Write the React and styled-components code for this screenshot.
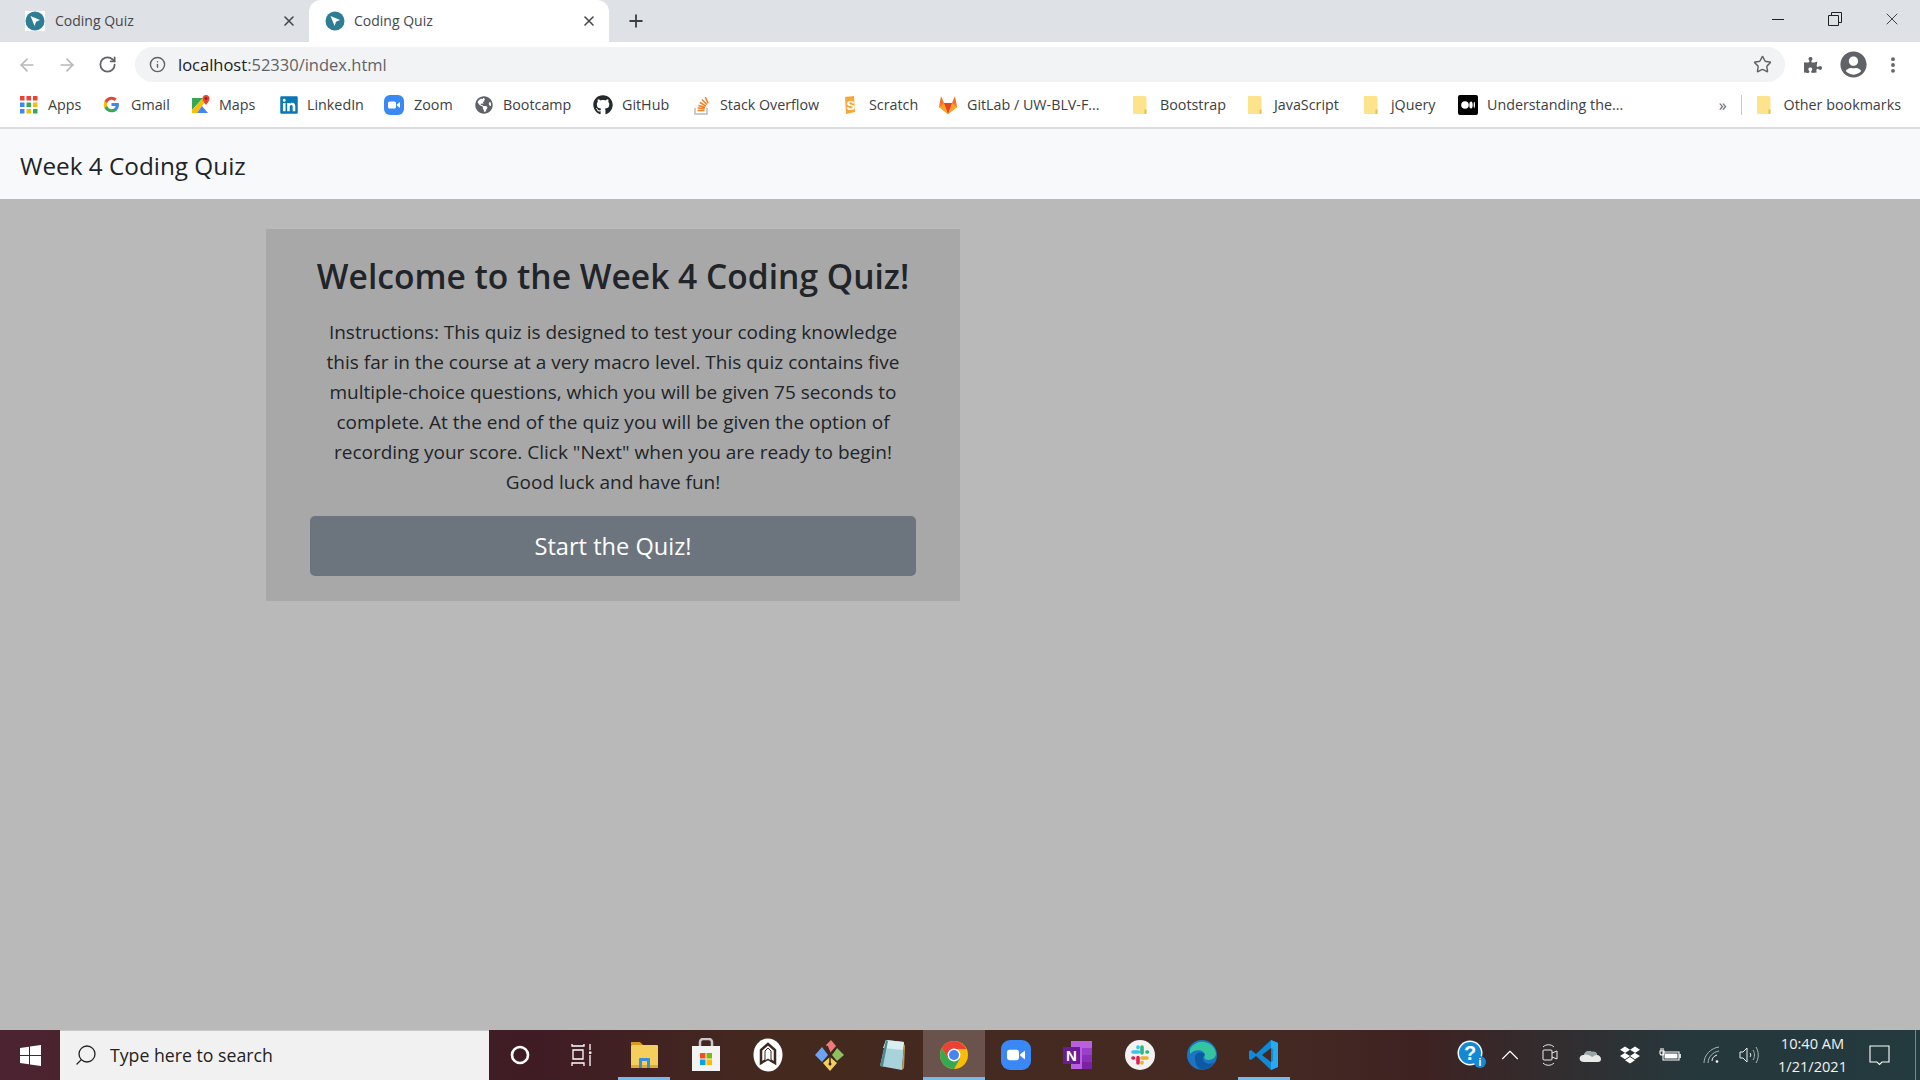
import React from 'react'
import styled, { createGlobalStyle } from 'styled-components'
import { ArrowLeft, ArrowRight, RotateCw, Info, Star, EllipsisVertical, Plus, X, ChevronUp, Search } from 'lucide-react'
import { FaGithub, FaLinkedin, FaDropbox, FaPuzzlePiece, FaUserCircle, FaGlobeAmericas } from 'react-icons/fa'

const GlobalStyle = createGlobalStyle`
  html, body { margin: 0; padding: 0; height: 100%; overflow: hidden; }
  body { font-family: "Open Sans", "Noto Sans", sans-serif; color: #212529; }
  * { box-sizing: border-box; }
`

const Screen = styled.div`
  display: flex;
  flex-direction: column;
  width: 1920px;
  height: 1080px;
  overflow: hidden;
  background: #b9b9b9;
`

const TabStrip = styled.div`
  display: flex;
  align-items: stretch;
  height: 42px;
  background: #dee1e6;
  padding-left: 9px;
`

const Tab = styled.div`
  display: flex;
  align-items: center;
  width: 300px;
  height: 42px;
  padding: 0 12px 1px 16px;
  background: ${p => (p.$active ? '#fff' : 'transparent')};
  border-radius: 12px 12px 0 0;
  font-size: 14px;
  color: #45484c;
`

const FaviconBox = styled.span`
  display: flex;
  background: ${p => (p.$boxed ? '#fff' : 'transparent')};
`

const TabTitle = styled.span`
  flex: 1;
  margin-left: ${p => (p.$active ? '9px' : '10px')};
`

const NewTab = styled.div`
  display: flex;
  align-items: center;
  margin-left: 17px;
  color: #3c4043;
`

const WindowButtons = styled.div`
  display: flex;
  margin-left: auto;
  color: #222;
`

const WindowButton = styled.div`
  display: flex;
  align-items: center;
  justify-content: center;
  width: 57px;
  height: 38px;
`

const Toolbar = styled.div`
  display: flex;
  align-items: center;
  height: 40px;
  padding: 5px 0 0 7px;
  background: #fff;
  color: #5f6368;
`

const NavButton = styled.div`
  display: flex;
  align-items: center;
  justify-content: center;
  width: 40px;
  color: ${p => (p.$disabled ? '#b6b8ba' : '#5f6368')};
`

const AddressBar = styled.div`
  display: flex;
  align-items: center;
  width: 1650px;
  height: 35px;
  margin-left: 8px;
  padding: 0 13px 0 14px;
  background: #f1f3f4;
  border-radius: 18px;
  font-size: 16.5px;
`

const UrlHost = styled.span`
  margin-left: 12px;
  color: #202124;
`

const UrlPath = styled.span`
  color: #5f6368;
`

const StarSlot = styled.span`
  display: flex;
  margin-left: auto;
`

const ToolIcons = styled.div`
  display: flex;
  align-items: center;
  margin-left: 15px;
`

const ToolIcon = styled.div`
  display: flex;
  justify-content: center;
  width: ${p => p.$w}px;
`

const BookmarkBar = styled.div`
  display: flex;
  align-items: center;
  height: 47px;
  padding-left: 20px;
  background: #fff;
  border-bottom: 2px solid #dadce0;
  font-size: 14.3px;
  color: #3c4043;
`

const Bookmark = styled.div`
  display: flex;
  align-items: center;
  flex: none;
  width: ${p => p.$w}px;
  white-space: nowrap;
`

const BookmarkIcon = styled.span`
  display: flex;
  align-items: center;
  flex: none;
  width: ${p => p.$slot || 28}px;
`

const Overflow = styled.div`
  margin-left: auto;
  font-size: 16px;
  color: #5f6368;
`

const Divider = styled.div`
  width: 1px;
  height: 20px;
  margin: 0 14px 0 14px;
  background: #c6c8ca;
`

const OtherBookmarks = styled(Bookmark)`
  margin-right: 19px;
  width: auto;
`

const NavBar = styled.nav`
  display: flex;
  align-items: center;
  height: 70px;
  padding: 2px 0 0 20px;
  background: #f8f9fa;
  font-size: 24.3px;
  color: #212529;
`

const Main = styled.main`
  flex: 1;
  padding: 30px 0 0 266px;
  background: #b9b9b9;
`

const Card = styled.section`
  display: flex;
  flex-direction: column;
  align-items: center;
  width: 694px;
  height: 372px;
  padding: 22px 44px 0;
  background: #a8a8a8;
`

const Title = styled.h1`
  margin: 0 0 16px;
  font-size: 33.6px;
  line-height: 50px;
  font-weight: 600;
  color: #212529;
  white-space: nowrap;
`

const Instructions = styled.p`
  margin: 0 0 19px;
  font-size: 19px;
  line-height: 30px;
  text-align: center;
  color: #212529;
  white-space: nowrap;
`

const StartButton = styled.button`
  width: 606px;
  height: 60px;
  border: 0;
  border-radius: 5px;
  background: #6c757d;
  color: #fff;
  font-family: inherit;
  font-size: 23.6px;
`

const Taskbar = styled.footer`
  display: flex;
  align-items: stretch;
  height: 50px;
  background: linear-gradient(90deg, #4c2431 0%, #3f1c24 28%, #44291f 40%, #452a23 66%, #3e2222 74%, #26383c 88%, #233a3e 100%);
  color: #fff;
`

const StartSlot = styled.div`
  display: flex;
  align-items: center;
  justify-content: center;
  width: 60px;
`

const SearchBox = styled.div`
  display: flex;
  align-items: center;
  width: 429px;
  padding: 0 0 2px 14px;
  background: #f1f1f1;
  border-top: 1px solid #c9c9c9;
  color: #222;
  font-size: 17.7px;
`

const SearchGlass = styled(Search)`
  transform: scaleX(-1);
`

const SearchText = styled.span`
  margin-left: 12px;
`

const TaskSlot = styled.div`
  display: flex;
  align-items: center;
  justify-content: center;
  position: relative;
  width: 62px;
  background: ${p => (p.$active ? 'rgba(255,255,255,.2)' : 'transparent')};
  ${p => p.$open && `
    &::after {
      content: "";
      position: absolute;
      bottom: 0;
      left: ${p.$active ? 0 : 5}px;
      right: ${p.$active ? 0 : 5}px;
      height: 3px;
      background: #76b9ed;
    }
  `}
`

const Tray = styled.div`
  display: flex;
  align-items: center;
  margin-left: auto;
`

const TraySlot = styled.div`
  display: flex;
  align-items: center;
  justify-content: center;
  width: 40px;
`

const Clock = styled.div`
  width: 85px;
  text-align: center;
  font-size: 14.6px;
  line-height: 23px;
  color: #f2f2f2;
`

const NotifySlot = styled.div`
  display: flex;
  justify-content: center;
  width: 48px;
`

const ShowDesktop = styled.div`
  width: 5px;
  height: 100%;
  margin-left: 12px;
  border-left: 1px solid #76868a;
`

const Favicon = () => (
  <svg width="20" height="20" viewBox="0 0 20 20">
    <circle cx="10" cy="10" r="9.5" fill="#2c7d95" />
    <path d="M5.5 5 L15 9 L11 10.8 L9.6 15 Z" fill="#fff" />
  </svg>
)

const AppsIcon = () => (
  <svg width="18" height="18" viewBox="0 0 18 18">
    {[0, 1, 2].flatMap(r => [0, 1, 2].map(c => (
      <rect key={`${r}${c}`} x={c * 6.5} y={r * 6.5} width="4.5" height="4.5"
        fill={[['#ea4335', '#ea4335', '#ea4335'], ['#4285f4', '#34a853', '#fbbc05'], ['#4285f4', '#fbbc05', '#34a853']][r][c]} />
    )))}
  </svg>
)

const GoogleIcon = () => (
  <svg width="17" height="17" viewBox="0 0 48 48">
    <path fill="#4285f4" d="M45 24.5c0-1.6-.1-3.1-.4-4.5H24v8.5h11.8c-.5 2.8-2 5.100-4.400 6.700v5.500h7.100c4.100-3.800 6.500-9.400 6.500-16.200z" />
    <path fill="#34a853" d="M24 46c5.900 0 10.900-2 14.500-5.300l-7.100-5.500c-2 1.300-4.500 2.100-7.400 2.100-5.700 0-10.500-3.800-12.300-9H4.400v5.700C8 41.200 15.400 46 24 46z" />
    <path fill="#fbbc05" d="M11.700 28.300c-.4-1.300-.7-2.800-.7-4.300s.3-3 .7-4.300V14H4.400C2.900 17 2 20.400 2 24s.9 7 2.400 10l7.300-5.700z" />
    <path fill="#ea4335" d="M24 10.700c3.200 0 6.100 1.100 8.400 3.300l6.300-6.300C34.900 4.100 29.900 2 24 2 15.400 2 8 6.900 4.400 14l7.300 5.700c1.800-5.200 6.600-9 12.300-9z" />
  </svg>
)

const MapsIcon = () => (
  <svg width="20" height="20" viewBox="0 0 20 20">
    <path d="M1 3 L12 3 L1 15 Z" fill="#34a853" />
    <path d="M1 15 L12 3 L13 8 L6 18 L1 18 Z" fill="#fbbc05" />
    <path d="M6 18 L11 11 L17 18 Z" fill="#4285f4" />
    <path d="M15 0 C12.500 0 11.500 2 11.500 3.500 C11.500 6 15 10 15 10 C15 10 18.500 6 18.500 3.500 C18.500 2 17.500 0 15 0 Z" fill="#ea4335" />
    <circle cx="15" cy="3.500" r="1.300" fill="#7f1d16" />
  </svg>
)

const ZoomIcon = ({ size = 20 }) => (
  <svg width={size} height={size} viewBox="0 0 20 20">
    <rect x="0" y="0" width="20" height="20" rx="6" fill="#3a88f5" />
    <rect x="4" y="6.500" width="8" height="7" rx="1.600" fill="#fff" />
    <path d="M12.800 9.500 L16 7 L16 13 L12.800 10.500 Z" fill="#fff" />
  </svg>
)

const ScratchIcon = () => (
  <svg width="13" height="20" viewBox="0 0 13 20">
    <path d="M2 2 L11 1 L12 17 L3 19 Z" fill="#f9a63a" />
    <text x="3.500" y="15" fontSize="13" fontWeight="700" fill="#fff" fontFamily="Liberation Sans, sans-serif">S</text>
  </svg>
)

const GitlabIcon = () => (
  <svg width="20" height="20" viewBox="0 0 20 20">
    <path d="M10 19 L1 12 L3 1 L6 8 L14 8 L17 1 L19 12 Z" fill="#fc6d26" />
    <path d="M10 19 L6 8 L14 8 Z" fill="#e24329" />
    <path d="M10 19 L1 12 L6 8 Z M10 19 L19 12 L14 8 Z" fill="#fca326" />
  </svg>
)

const FolderIcon = () => (
  <svg width="16" height="20" viewBox="0 0 16 20">
    <path d="M1 2 a1 1 0 0 1 1-1 H13 a1.500 1.500 0 0 1 1.500 1.500 V18 a1 1 0 0 1-1 1 H2 a1 1 0 0 1-1-1 Z" fill="#fde48c" />
    <path d="M12.500 19 V14.500 h2 V18 a1 1 0 0 1-1 1 Z" fill="#e9c243" />
  </svg>
)

const MediumIcon = () => (
  <svg width="20" height="20" viewBox="0 0 20 20">
    <rect width="20" height="20" rx="2" fill="#000" />
    <ellipse cx="7" cy="10" rx="3.800" ry="3.800" fill="#fff" />
    <ellipse cx="13" cy="10" rx="1.700" ry="3.500" fill="#fff" />
    <ellipse cx="16.300" cy="10" rx=".7" ry="3.200" fill="#fff" />
  </svg>
)

const StackIcon = () => (
  <svg width="18" height="20" viewBox="0 0 18 20">
    <path d="M2 13 v6 h12 v-6" fill="none" stroke="#bcbbbb" strokeWidth="1.500" />
    <path d="M4.500 15.500 h7 M4.700 13 l7 .6 M5.400 10.500 l6.800 1.800 M6.800 7.500 l6 3.400 M9 4.500 l5 5 M12.300 2 l2.800 6.300" stroke="#f48024" strokeWidth="1.600" fill="none" />
  </svg>
)

const WindowsLogo = () => (
  <svg width="21" height="21" viewBox="0 0 21 21">
    <path d="M0 3 L9 1.700 V10 H0 Z M10 1.500 L21 0 V10 H10 Z M0 11 H9 V19.300 L0 18 Z M10 11 H21 V21 L10 19.500 Z" fill="#fff" />
  </svg>
)

const TaskViewIcon = () => (
  <svg width="22" height="24" viewBox="0 0 22 24" fill="none" stroke="#fff" strokeWidth="1.300">
    <path d="M1 1 V3 H13 V1 M2 7 H12 V16 H2 Z M1 23 V20 H13 V23" />
    <path d="M19 1 V7 M19 12 V23" />
    <rect x="18" y="8.500" width="2.400" height="2.400" fill="#fff" stroke="none" />
  </svg>
)

const ExplorerIcon = () => (
  <svg width="30" height="30" viewBox="0 0 30 30">
    <path d="M2 2 H11 L14 5 H2 Z" fill="#d99a1c" />
    <rect x="2" y="5" width="27" height="23" rx="1" fill="#f5cf5e" />
    <rect x="2" y="25" width="27" height="3" fill="#e3ab2e" />
    <path d="M10 28 V19 a1 1 0 0 1 1-1 H20 a1 1 0 0 1 1 1 V28 H18 V21 H13 V28 Z" fill="#3b8fd6" />
  </svg>
)

const StoreIcon = () => (
  <svg width="30" height="34" viewBox="0 0 30 34">
    <path d="M9 9 V4 a3 3 0 0 1 3-3 H18 a3 3 0 0 1 3 3 V9" fill="none" stroke="#c9c9c9" strokeWidth="2.500" />
    <rect x="1" y="8" width="28" height="25" fill="#f3f3f3" />
    <rect x="9" y="15" width="5.500" height="5.500" fill="#f25022" />
    <rect x="15.500" y="15" width="5.500" height="5.500" fill="#7fba00" />
    <rect x="9" y="21.500" width="5.500" height="5.500" fill="#00a4ef" />
    <rect x="15.500" y="21.500" width="5.500" height="5.500" fill="#ffb900" />
  </svg>
)

const GithubDesktopIcon = () => (
  <svg width="30" height="34" viewBox="0 0 30 34">
    <ellipse cx="15" cy="17" rx="14.500" ry="16.500" fill="#fff" />
    <path d="M8 25 V12 L15 6 L22 12 V25 L15 21 Z" fill="none" stroke="#3a2a22" strokeWidth="2.500" />
    <path d="M12 23 V13 L15 10 L18 13 V23 L15 21 Z" fill="#fff" stroke="#3a2a22" strokeWidth="1" />
  </svg>
)

const KrakenIcon = () => (
  <svg width="32" height="34" viewBox="0 0 32 34">
    <path d="M14 17 L8 9 L1 17 L8 24 Z" fill="#6ea2f5" />
    <path d="M17 2 L12 7 L16 15 L22 8 Z" fill="#ee7a7a" />
    <path d="M23 10 L30 17 L23 23 L18 17 Z" fill="#8cc15e" />
    <path d="M16 19 L9 25 L16 33 L23 25 Z" fill="#f5cf5e" />
    <circle cx="16" cy="26" r="1.500" fill="#3a2a22" />
    <path d="M16 26 V15 M13 8 L16 15 M22 10 L18 15" stroke="#3a2a22" strokeWidth="1.500" fill="none" />
  </svg>
)

const NotepadIcon = () => (
  <svg width="28" height="34" viewBox="0 0 28 34">
    <path d="M8 2 L26 4 L24 32 L2 28 Z" fill="#a9d3da" />
    <path d="M8 2 L26 4 L25 12 L5 10 Z" fill="#d8eef0" />
    <path d="M2 28 L8 2 L10 3 L5 28 Z" fill="#4f8a92" />
    <path d="M24 32 L26 6 L27 8 L26 30 Z" fill="#c49a4a" />
  </svg>
)

const ChromeIcon = () => (
  <svg width="28" height="28" viewBox="0 0 28 28">
    <circle cx="14" cy="14" r="14" fill="#fbbc05" />
    <path d="M14 0 A14 14 0 0 0 1.900 7 L8 17.500 L14 8 H26.100 A14 14 0 0 0 14 0 Z" fill="#ea4335" />
    <path d="M1.900 7 A14 14 0 0 0 14 28 L20 17.500 L8 17.500 Z" fill="#34a853" />
    <circle cx="14" cy="14" r="6.400" fill="#fff" />
    <circle cx="14" cy="14" r="5" fill="#4285f4" />
  </svg>
)

const OneNoteIcon = () => (
  <svg width="30" height="30" viewBox="0 0 30 30">
    <rect x="8" y="1" width="21" height="28" fill="#ba5fe0" />
    <rect x="19" y="8" width="10" height="7" fill="#9a3fc7" />
    <rect x="19" y="15" width="10" height="7" fill="#8a2fb5" />
    <rect x="19" y="22" width="10" height="7" fill="#7a22a3" />
    <rect x="0" y="7" width="17" height="17" fill="#6a1b9a" />
    <text x="8.500" y="21" textAnchor="middle" fontSize="15" fontWeight="700" fill="#fff" fontFamily="Liberation Sans, sans-serif">N</text>
  </svg>
)

const SlackIcon = () => (
  <svg width="30" height="30" viewBox="0 0 30 30">
    <circle cx="15" cy="15" r="15" fill="#f4f1f1" />
    <g strokeWidth="3.600" strokeLinecap="round" fill="none">
      <path d="M8 12 H13.500 M13 7 V7.500" stroke="#36c5f0" />
      <path d="M17 7 V13 M22 12 H22.500" stroke="#2eb67d" />
      <path d="M17 18 H22 M17 23 V22.500" stroke="#ecb22e" />
      <path d="M13 17.500 V23 M8 18 H8.500" stroke="#e01e5a" />
    </g>
  </svg>
)

const EdgeIcon = () => (
  <svg width="30" height="30" viewBox="0 0 30 30">
    <circle cx="15" cy="15" r="15" fill="#1b75c4" />
    <path d="M3 9 A14 14 0 0 1 29 13 C29 18 25 20 21 20 C17 20 17 17 18 15 C17 10 9 8 3 14 Z" fill="#34c4a0" />
    <path d="M8 18 C8 12 16 11 18 15 C15 16 15 21 19 23 C23 25 27 23 28 21 C25 27 19 30 15 30 C11 29 8 24 8 18 Z" fill="#0c59a4" />
  </svg>
)

const VscodeIcon = () => (
  <svg width="30" height="32" viewBox="0 0 30 32">
    <path d="M22 1 L29 4 V28 L22 31 L7 17 L2 21 L0 20 V12 L2 11 L7 15 Z M22 9 L13 16 L22 23 Z" fill="#0e8ad7" />
    <path d="M22 1 L29 4 V28 L22 31 Z M22 9 V23 L24 22 V10 Z" fill="#29a9ee" />
  </svg>
)

const HelpIcon = () => (
  <svg width="30" height="30" viewBox="0 0 30 30">
    <circle cx="13" cy="13" r="12.500" fill="#fff" />
    <circle cx="13" cy="13" r="11" fill="#1389d4" />
    <text x="13" y="20" textAnchor="middle" fontSize="20" fontWeight="700" fill="#fff" fontFamily="Liberation Sans, sans-serif">?</text>
    <circle cx="23" cy="22" r="6" fill="#1389d4" />
    <text x="23" y="26" textAnchor="middle" fontSize="10" fontWeight="700" fill="#fff" fontFamily="Liberation Sans, sans-serif">i</text>
  </svg>
)

const HelpNudge = styled.span`
  display: flex;
  margin-left: 4px;
`

const MeetIcon = () => (
  <svg width="16" height="22" viewBox="0 0 16 22" fill="none" stroke="#eee" strokeWidth="1">
    <rect x="1" y="6" width="9" height="10" rx="1" />
    <path d="M10 9 L15 7 V15 L10 13" />
    <path d="M1 3 C4 0 9 0 12 3 M1 19 C4 22 9 22 12 19" />
  </svg>
)

const CloudIcon = () => (
  <svg width="22" height="14" viewBox="0 0 22 14">
    <path d="M5 14 C1 14 0 11 1 9 C2 7 4 7 5 7 C6 3 10 2 13 4 C16 3 18 5 18 7 C20 7 22 9 22 11 C22 13 21 14 19 14 Z" fill="#e9e9e9" />
    <path d="M5 7 C6 3 10 2 13 4 C16 3 18 5 18 7 C15 7 14 9 13 9 C11 7 7 6 5 7 Z" fill="#9aa3a6" />
  </svg>
)

const BatteryIcon = () => (
  <svg width="22" height="14" viewBox="0 0 22 14" fill="none" stroke="#fff" strokeWidth="1.100">
    <path d="M4 4 H20 V12 H4 Z" />
    <rect x="5.500" y="5.500" width="13" height="5" fill="#fff" stroke="none" />
    <rect x="20.300" y="6" width="1.500" height="4" fill="#fff" stroke="none" />
    <path d="M1 3 H5 V5 C5 7 3 7 3 7 C3 7 1 7 1 5 Z M2 0 V3 M4 0 V3" />
  </svg>
)

const WifiIcon = () => (
  <svg width="18" height="18" viewBox="0 0 18 18" fill="none" stroke="#a9b4b6" strokeWidth="1">
    <path d="M1 17 C1 9 8 2 16 1" />
    <path d="M5 17 C5 11 10 6 16 5" />
    <path d="M9 15 C9 12 11 10 14 9" stroke="#eee" />
    <circle cx="14" cy="15.500" r="1.300" fill="#fff" stroke="none" />
  </svg>
)

const WifiNudge = styled.span`
  display: flex;
  margin-left: 4px;
`

const VolumeIcon = () => (
  <svg width="22" height="20" viewBox="0 0 22 20" fill="none" stroke="#eee" strokeWidth="1">
    <path d="M1 7 H4 L8 3 V17 L4 13 H1 Z" />
    <path d="M11 8 C12 9 12 11 11 12" />
    <path d="M14 5 C16 8 16 12 14 15" stroke="#a9b4b6" />
    <path d="M17 2 C20 7 20 13 17 18" stroke="#a9b4b6" />
  </svg>
)

const NotifyIcon = () => (
  <svg width="21" height="21" viewBox="0 0 21 21" fill="none" stroke="#fff" strokeWidth="1.100">
    <path d="M1 1 H20 V17 H13 L10.500 19.500 L8 17 H1 Z" />
  </svg>
)

const bookmarks = [
  { name: 'Apps', w: 83, icon: <AppsIcon /> },
  { name: 'Gmail', w: 88, icon: <GoogleIcon /> },
  { name: 'Maps', w: 88, icon: <MapsIcon /> },
  { name: 'LinkedIn', w: 105, icon: <FaLinkedin size={20} color="#0a78b5" /> },
  { name: 'Zoom', w: 91, slot: 30, icon: <ZoomIcon /> },
  { name: 'Bootcamp', w: 118, icon: <FaGlobeAmericas size={18} color="#5f6368" /> },
  { name: 'GitHub', w: 100, slot: 29, icon: <FaGithub size={20} color="#24292e" /> },
  { name: 'Stack Overflow', w: 150, slot: 27, icon: <StackIcon /> },
  { name: 'Scratch', w: 95, slot: 26, icon: <ScratchIcon /> },
  { name: 'GitLab / UW-BLV-F...', w: 194, slot: 29, icon: <GitlabIcon /> },
  { name: 'Bootstrap', w: 115, icon: <FolderIcon /> },
  { name: 'JavaScript', w: 116, slot: 27, icon: <FolderIcon /> },
  { name: 'jQuery', w: 95, icon: <FolderIcon /> },
  { name: 'Understanding the...', w: 200, slot: 29, icon: <MediumIcon /> },
]

const pinned = [
  { key: 'explorer', icon: <ExplorerIcon />, open: true },
  { key: 'store', icon: <StoreIcon /> },
  { key: 'ghdesktop', icon: <GithubDesktopIcon /> },
  { key: 'kraken', icon: <KrakenIcon /> },
  { key: 'notepad', icon: <NotepadIcon /> },
  { key: 'chrome', icon: <ChromeIcon />, open: true, active: true },
  { key: 'zoom', icon: <ZoomIcon size={30} /> },
  { key: 'onenote', icon: <OneNoteIcon /> },
  { key: 'slack', icon: <SlackIcon /> },
  { key: 'edge', icon: <EdgeIcon /> },
  { key: 'vscode', icon: <VscodeIcon />, open: true },
]

const App = () => (
  <Screen>
    <GlobalStyle />
    <TabStrip>
      {[false, true].map(active => (
        <Tab key={String(active)} $active={active}>
          <FaviconBox $boxed={!active}><Favicon /></FaviconBox>
          <TabTitle $active={active}>Coding Quiz</TabTitle>
          <X size={16} strokeWidth={2.4} color="#45484c" />
        </Tab>
      ))}
      <NewTab><Plus size={20} strokeWidth={2.2} /></NewTab>
      <WindowButtons>
        <WindowButton>
          <svg width="14" height="14" viewBox="0 0 14 14" fill="none" stroke="#222" strokeWidth="1">
            <path d="M1 7.500 H13" />
          </svg>
        </WindowButton>
        <WindowButton>
          <svg width="14" height="14" viewBox="0 0 14 14" fill="none" stroke="#222" strokeWidth="1">
            <path d="M.5 3.500 H10.500 V13.500 H.5 Z M3.500 3.500 V.5 H13.500 V10.500 H10.500" />
          </svg>
        </WindowButton>
        <WindowButton><X size={20} strokeWidth={1} /></WindowButton>
      </WindowButtons>
    </TabStrip>

    <Toolbar>
      <NavButton $disabled><ArrowLeft size={20} /></NavButton>
      <NavButton $disabled><ArrowRight size={20} /></NavButton>
      <NavButton><RotateCw size={19} strokeWidth={2.2} /></NavButton>
      <AddressBar>
        <Info size={17} />
        <UrlHost>localhost<UrlPath>:52330/index.html</UrlPath></UrlHost>
        <StarSlot><Star size={19} strokeWidth={1.8} /></StarSlot>
      </AddressBar>
      <ToolIcons>
        <ToolIcon $w={25}><FaPuzzlePiece size={18} /></ToolIcon>
        <ToolIcon $w={56}><FaUserCircle size={27} /></ToolIcon>
        <ToolIcon $w={24}><EllipsisVertical size={20} strokeWidth={2.6} /></ToolIcon>
      </ToolIcons>
    </Toolbar>

    <BookmarkBar>
      {bookmarks.map(b => (
        <Bookmark key={b.name} $w={b.w}>
          <BookmarkIcon $slot={b.slot}>{b.icon}</BookmarkIcon>
          {b.name}
        </Bookmark>
      ))}
      <Overflow>»</Overflow>
      <Divider />
      <OtherBookmarks>
        <BookmarkIcon><FolderIcon /></BookmarkIcon>
        Other bookmarks
      </OtherBookmarks>
    </BookmarkBar>

    <NavBar>Week 4 Coding Quiz</NavBar>

    <Main>
      <Card>
        <Title>Welcome to the Week 4 Coding Quiz!</Title>
        <Instructions>
          Instructions: This quiz is designed to test your coding knowledge<br />
          this far in the course at a very macro level. This quiz contains five<br />
          multiple-choice questions, which you will be given 75 seconds to<br />
          complete. At the end of the quiz you will be given the option of<br />
          recording your score. Click "Next" when you are ready to begin!<br />
          Good luck and have fun!
        </Instructions>
        <StartButton>Start the Quiz!</StartButton>
      </Card>
    </Main>

    <Taskbar>
      <StartSlot><WindowsLogo /></StartSlot>
      <SearchBox>
        <SearchGlass size={24} strokeWidth={1.3} />
        <SearchText>Type here to search</SearchText>
      </SearchBox>
      <TaskSlot>
        <svg width="20" height="20" viewBox="0 0 20 20" fill="none" stroke="#fff" strokeWidth="2.600"><circle cx="10" cy="10" r="8" /></svg>
      </TaskSlot>
      <TaskSlot><TaskViewIcon /></TaskSlot>
      {pinned.map(p => (
        <TaskSlot key={p.key} $open={p.open} $active={p.active}>{p.icon}</TaskSlot>
      ))}
      <Tray>
        <TraySlot><HelpNudge><HelpIcon /></HelpNudge></TraySlot>
        <TraySlot><ChevronUp size={30} strokeWidth={0.9} /></TraySlot>
        <TraySlot><MeetIcon /></TraySlot>
        <TraySlot><CloudIcon /></TraySlot>
        <TraySlot><FaDropbox size={20} /></TraySlot>
        <TraySlot><BatteryIcon /></TraySlot>
        <TraySlot><WifiNudge><WifiIcon /></WifiNudge></TraySlot>
        <TraySlot><VolumeIcon /></TraySlot>
        <Clock>10:40 AM<br />1/21/2021</Clock>
        <NotifySlot><NotifyIcon /></NotifySlot>
        <ShowDesktop />
      </Tray>
    </Taskbar>
  </Screen>
)

export default App
